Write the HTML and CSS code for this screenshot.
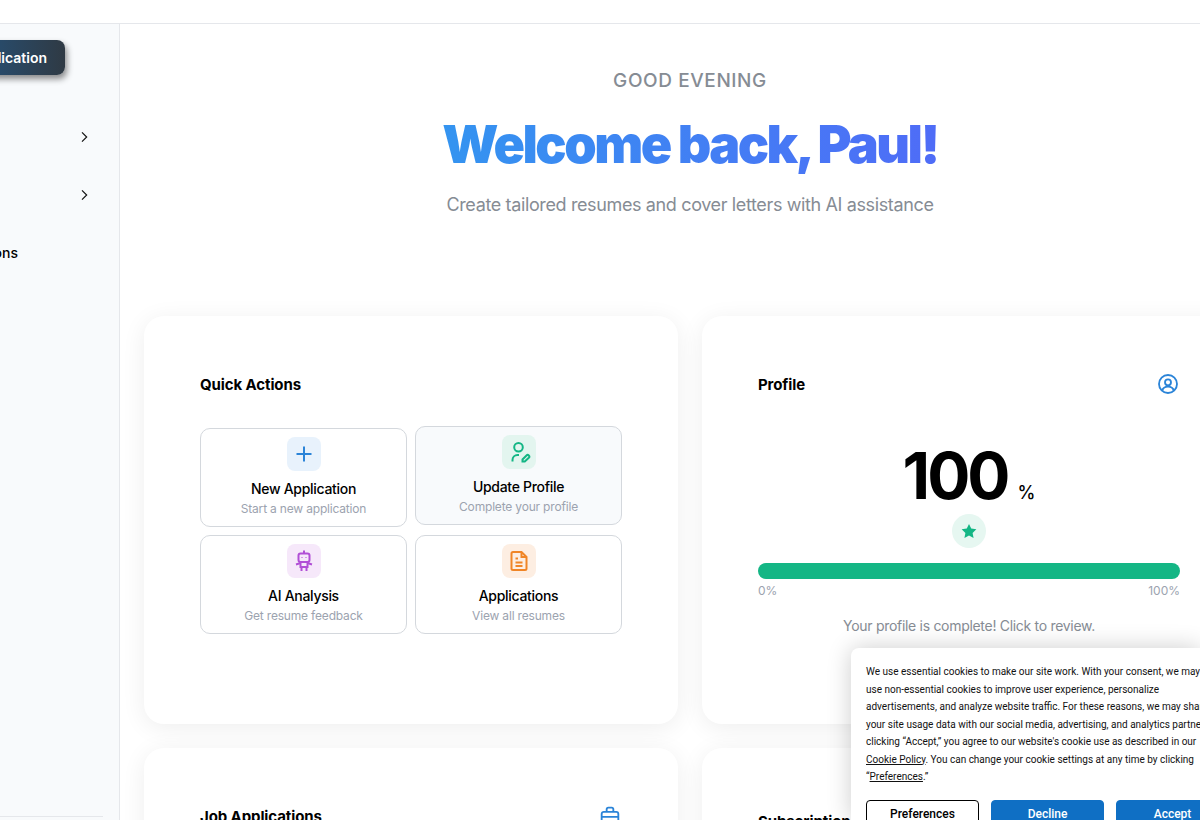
FILE: index.html
```html
<!DOCTYPE html>
<html lang="en">
<head>
  <meta charset="UTF-8" />
  <title>Dashboard</title>
  <link rel="stylesheet" href="styles.css">
</head>
<body>
  <div class="topbar"></div>

  <div class="layout">
    <aside class="sidebar">
      <div class="sidebar-inner">
        <button class="new-btn">New Application</button>
        <div class="side-row first">
          <svg class="chev" viewBox="0 0 24 24"><path d="M9 5l7 7-7 7"/></svg>
        </div>
        <div class="side-row">
          <svg class="chev" viewBox="0 0 24 24"><path d="M9 5l7 7-7 7"/></svg>
        </div>
        <div class="side-row"><span>Applications</span></div>
      </div>
      <div class="side-line"></div>
    </aside>

    <main class="main">
      <div class="hero">
        <div class="greeting">GOOD EVENING</div>
        <h1>Welcome back, Paul!</h1>
        <p>Create tailored resumes and cover letters with AI assistance</p>
      </div>

      <div class="cards">
        <section class="card">
          <div class="card-head"><h2>Quick Actions</h2></div>
          <div class="actions">
            <div class="action">
              <div class="action-icon blue">
                <svg viewBox="0 0 24 24"><path d="M12 4.500v15M4.500 12h15"/></svg>
              </div>
              <b>New Application</b>
              <small>Start a new application</small>
            </div>
            <div class="action hovered">
              <div class="action-icon green">
                <svg viewBox="0 0 24 24"><circle cx="11.500" cy="7.300" r="4.300"/><path d="M5.500 21.500v-1.500a5 5 0 0 1 5-5h1.500"/><path d="M15.500 21.500v-2l4-4a1.400 1.400 0 0 1 2.300 2.300l-4 3.700z"/></svg>
              </div>
              <b>Update Profile</b>
              <small>Complete your profile</small>
            </div>
            <div class="action">
              <div class="action-icon purple">
                <svg viewBox="0 0 24 24"><path d="M12 1.500v3"/><rect x="6.500" y="4.500" width="11" height="8.500" rx="2"/><path d="M10 8.500v.5M14 8.500v.5"/><path d="M8.500 13h7v5h-7z"/><path d="M4 15.500l4.500-1.500M20 15.500L15.500 14M9.500 18v4M14.500 18v4"/></svg>
              </div>
              <b>AI Analysis</b>
              <small>Get resume feedback</small>
            </div>
            <div class="action">
              <div class="action-icon orange">
                <svg viewBox="0 0 24 24"><path d="M6 3h8.500l5 5v11.500a1.500 1.500 0 0 1-1.500 1.500H6a1.500 1.500 0 0 1-1.500-1.500v-15A1.500 1.500 0 0 1 6 3z"/><path d="M14.500 3v5h5"/><path d="M8.500 9.500h2.500M8.500 13.500h7M8.500 17h7"/></svg>
              </div>
              <b>Applications</b>
              <small>View all resumes</small>
            </div>
          </div>
        </section>

        <section class="card">
          <div class="card-head">
            <h2>Profile</h2>
            <svg class="head-icon" viewBox="0 0 24 24"><circle cx="12" cy="12" r="10.800"/><circle cx="12" cy="10" r="3.600"/><path d="M5 20c1-3.500 3.500-4.800 7-4.800s6 1.300 7 4.800"/></svg>
          </div>
          <div class="score"><span class="score-num">100</span><span class="score-pct">%</span></div>
          <div class="star">
            <svg viewBox="0 0 24 24"><path d="M12 2.500l3 6.300 6.800.9-5 4.800 1.300 6.900-6.100-3.400-6.100 3.400 1.300-6.900-5-4.800 6.800-.9z"/></svg>
          </div>
          <div class="bar"></div>
          <div class="bar-labels"><span>0%</span><span>100%</span></div>
          <p class="profile-note">Your profile is complete! Click to review.</p>
        </section>

        <section class="card">
          <div class="card-head">
            <h2>Job Applications</h2>
            <svg class="head-icon" viewBox="0 0 24 24"><rect x="2" y="7" width="20" height="15" rx="2.500"/><path d="M8 7V4a2 2 0 0 1 2-2h4a2 2 0 0 1 2 2v3"/><path d="M2 13h20M12 12v2"/></svg>
          </div>
        </section>

        <section class="card">
          <div class="card-head sub-head"><h2>Subscription</h2></div>
        </section>
      </div>
    </main>
  </div>

  <div class="cookie">
    <p>We use essential cookies to make our site work. With your consent, we may<br>
    use non-essential cookies to improve user experience, personalize<br>
    advertisements, and analyze website traffic. For these reasons, we may share<br>
    your site usage data with our social media, advertising, and analytics partners. By<br>
    clicking “Accept,” you agree to our website's cookie use as described in our<br>
    <a href="#">Cookie Policy</a>. You can change your cookie settings at any time by clicking<br>
    “<a href="#">Preferences</a>.”</p>
    <div class="cookie-btns">
      <button class="outline">Preferences</button>
      <button>Decline</button>
      <button>Accept</button>
    </div>
  </div>
</body>
</html>
```

FILE: styles.css
```css
body {
  font-family: Inter, "Liberation Sans", sans-serif;
  background: #fff;
  color: #000;
  margin: 0;
  height: 820px;
  overflow: hidden;
  position: relative;
}
.topbar {
  height: 23px;
  background: #fff;
  border-bottom: 1px solid #e5e7eb;
}
.layout {
  display: flex;
  height: 796px;
  overflow: hidden;
}

/* sidebar is scrolled off to the left */
.sidebar {
  flex: 0 0 120px;
  box-sizing: border-box;
  background: #f8fafc;
  border-right: 1px solid #e5e7eb;
  overflow: hidden;
  display: flex;
  flex-direction: column;
}
.sidebar-inner {
  width: 224px;
  margin-left: -134px;
  padding-top: 16px;
  flex: 1;
}
.new-btn {
  display: block;
  width: 199px;
  height: 35px;
  border: none;
  border-radius: 8px;
  color: #fff;
  font-family: inherit;
  font-size: 14px;
  font-weight: 600;
  text-align: right;
  padding: 0 18px 0 0;
  background: linear-gradient(90deg, #1c6cb4, #2f3a44);
  box-shadow: 2px 4px 6px rgba(0, 0, 0, 0.45);
}
.side-row {
  height: 58px;
  display: flex;
  align-items: center;
  justify-content: flex-end;
  font-size: 14px;
  font-weight: 500;
}
.side-row.first {
  margin-top: 33px;
}
.side-row span {
  margin-right: 72px;
  margin-bottom: 2px;
}
.chev {
  width: 16px;
  height: 16px;
  margin-right: -2px;
  fill: none;
  stroke: #111;
  stroke-width: 1.800;
}
.side-line {
  height: 1px;
  background: #e5e7eb;
  margin: 0 16px 3px 0;
}

.main {
  flex: 0 0 1140px;
  box-sizing: border-box;
  padding: 0 24px;
}
.hero {
  text-align: center;
  padding-top: 45px;
  height: 292px;
  box-sizing: border-box;
}
.greeting {
  color: #868c94;
  font-size: 19px;
  line-height: 24px;
  font-weight: 500;
  letter-spacing: 0.6px;
}
.hero h1 {
  margin: 20px 0 0;
  font-family: Inter, sans-serif;
  font-size: 52px;
  line-height: 64px;
  font-weight: 900;
  letter-spacing: -2.500px;
  background: linear-gradient(90deg, #3494f0, #4f6cf7);
  background-clip: text;
  -webkit-background-clip: text;
  color: transparent;
  display: inline-block;
}
.hero p {
  margin: 14px 0 0;
  color: #868c94;
  font-size: 18px;
  line-height: 28px;
  letter-spacing: -0.37px;
}

.cards {
  display: grid;
  grid-template-columns: 534px 534px;
  grid-auto-rows: 408px;
  gap: 24px;
}
.card {
  background: #fff;
  border-radius: 20px;
  box-shadow: 0 4px 24px rgba(0, 0, 0, 0.07);
  padding: 56px;
}
.card-head {
  display: flex;
  justify-content: space-between;
  align-items: center;
  height: 24px;
}
.sub-head {
  margin-top: 5px;
}
.card h2 {
  margin: 0;
  font-size: 15px;
  font-weight: 700;
  letter-spacing: -0.1px;
}
.head-icon {
  width: 20px;
  height: 20px;
  margin-right: 2px;
  fill: none;
  stroke: #2b84d8;
  stroke-width: 2.200;
}

.actions {
  margin-top: 32px;
  display: grid;
  grid-template-columns: 207px 207px;
  grid-auto-rows: 99px;
  gap: 8px;
}
.action {
  box-sizing: border-box;
  border: 1px solid #d4d8dd;
  border-radius: 10px;
  padding-top: 8px;
  display: flex;
  flex-direction: column;
  align-items: center;
  background: #fff;
}
.action.hovered {
  background: #f8fafc;
  transform: translateY(-2px);
}
.action b {
  font-size: 14px;
  line-height: 20px;
  font-weight: 500;
  letter-spacing: -0.3px;
  margin-top: 8px;
}
.action small {
  font-size: 12px;
  line-height: 18px;
  letter-spacing: -0.18px;
  color: #9ca3af;
  margin-top: 1px;
}
.action-icon {
  width: 34px;
  height: 34px;
  border-radius: 8px;
  display: flex;
  align-items: center;
  justify-content: center;
}
.action-icon svg {
  width: 24px;
  height: 24px;
  fill: none;
  stroke-width: 2;
}
.blue { background: #e8f2fc; }
.blue svg { stroke: #2b84d8; }
.green { background: #e3f5ef; }
.green svg { stroke: #14b685; }
.purple { background: #f6e8fa; }
.purple svg { stroke: #b14fd6; }
.orange { background: #fdeee2; }
.orange svg { stroke: #f08526; }

.score {
  margin-top: 48px;
  height: 64px;
  display: flex;
  justify-content: center;
  align-items: baseline;
  line-height: 64px;
}
.score-num {
  font-size: 64px;
  font-weight: 700;
  letter-spacing: -3px;
}
.score-pct {
  font-size: 18px;
  font-weight: 500;
  margin-left: 10px;
}
.star {
  width: 34px;
  height: 34px;
  border-radius: 50%;
  background: #e6f7f1;
  margin: 6px auto 0;
  display: flex;
  align-items: center;
  justify-content: center;
}
.star svg {
  width: 18px;
  height: 18px;
  fill: #14b685;
}
.bar {
  height: 16px;
  border-radius: 8px;
  background: #14b685;
  margin-top: 15px;
}
.bar-labels {
  display: flex;
  justify-content: space-between;
  margin-top: 4px;
  font-size: 12px;
  line-height: 16px;
  color: #9ca3af;
}
.profile-note {
  margin: 17px 0 0;
  text-align: center;
  font-size: 14px;
  line-height: 20px;
  letter-spacing: -0.3px;
  color: #868c94;
}

/* cookie banner sits over the page, cut off by the window */
.cookie {
  position: absolute;
  left: 851px;
  top: 648px;
  width: 349px;
  height: 172px;
  box-sizing: border-box;
  padding: 15px;
  background: #fff;
  border-radius: 8px 0 0 0;
  box-shadow: 0 0 24px rgba(0, 0, 0, 0.2);
  overflow: hidden;
}
.cookie p {
  margin: 0;
  font-family: Roboto, sans-serif;
  font-size: 10px;
  line-height: 17.500px;
  white-space: nowrap;
  color: #111;
}
.cookie a {
  color: #111;
}
.cookie-btns {
  display: flex;
  gap: 12px;
  margin-top: 14px;
}
.cookie-btns button {
  flex: 0 0 113px;
  height: 29px;
  border: 1px solid #0f6fc4;
  border-radius: 4px;
  background: #0f6fc4;
  color: #fff;
  font-family: Roboto, sans-serif;
  font-size: 12px;
  font-weight: 500;
}
.cookie-btns .outline {
  background: #fff;
  border-color: #000;
  color: #000;
}
```
